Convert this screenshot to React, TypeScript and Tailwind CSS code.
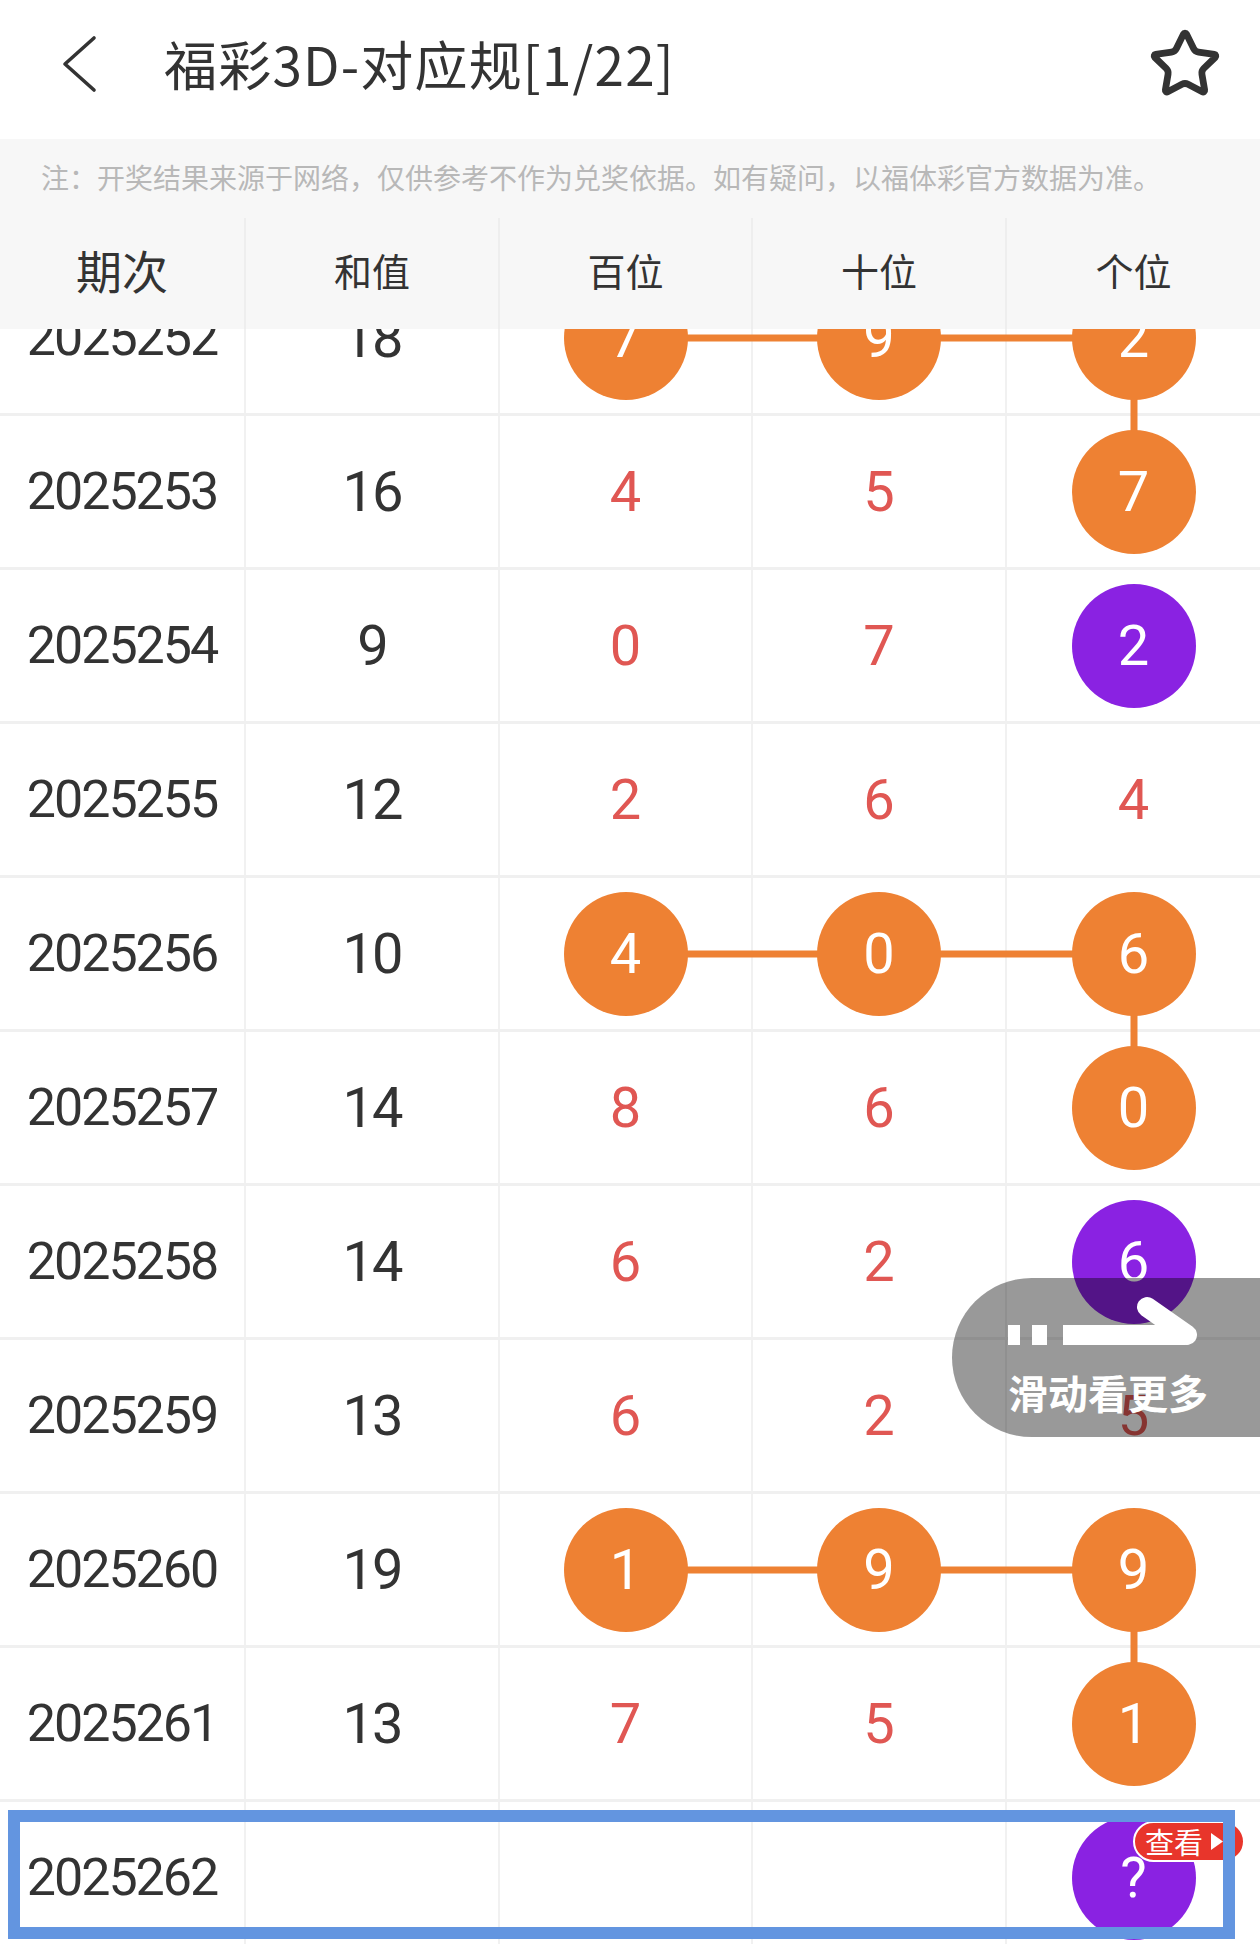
import { Star } from "lucide-react";

type Kind = "r" | "o" | "p" | "e";

interface Row {
  period: string;
  sum: string;
  digits: string[];
  kinds: Kind[];
  badge?: boolean;
}

const rows: Row[] = [
  { period: "2025252", sum: "18", digits: ["7", "9", "2"], kinds: ["o", "o", "o"] },
  { period: "2025253", sum: "16", digits: ["4", "5", "7"], kinds: ["r", "r", "o"] },
  { period: "2025254", sum: "9", digits: ["0", "7", "2"], kinds: ["r", "r", "p"] },
  { period: "2025255", sum: "12", digits: ["2", "6", "4"], kinds: ["r", "r", "r"] },
  { period: "2025256", sum: "10", digits: ["4", "0", "6"], kinds: ["o", "o", "o"] },
  { period: "2025257", sum: "14", digits: ["8", "6", "0"], kinds: ["r", "r", "o"] },
  { period: "2025258", sum: "14", digits: ["6", "2", "6"], kinds: ["r", "r", "p"] },
  { period: "2025259", sum: "13", digits: ["6", "2", "5"], kinds: ["r", "r", "r"] },
  { period: "2025260", sum: "19", digits: ["1", "9", "9"], kinds: ["o", "o", "o"] },
  { period: "2025261", sum: "13", digits: ["7", "5", "1"], kinds: ["r", "r", "o"] },
  { period: "2025262", sum: "", digits: ["", "", "?"], kinds: ["e", "e", "p"], badge: true },
];

const allOrange = (r?: Row) => !!r && r.kinds.every((k) => k === "o");

function DigitCell({
  digit,
  kind,
  left,
  right,
  up,
  down,
  badge,
  last,
}: {
  digit: string;
  kind: Kind;
  left: boolean;
  right: boolean;
  up: boolean;
  down: boolean;
  badge?: boolean;
  last: boolean;
}) {
  return (
    <div
      className={`relative flex items-center justify-center ${
        last ? "" : "border-r-2 border-[#f1f1f1]"
      }`}
    >
      {left && (
        <div className="absolute left-0 right-1/2 top-1/2 h-[7px] -translate-y-1/2 bg-[#ee8133]" />
      )}
      {right && (
        <div className="absolute left-1/2 right-[-2px] top-1/2 h-[7px] -translate-y-1/2 bg-[#ee8133]" />
      )}
      {up && (
        <div className="absolute left-1/2 top-[-3px] bottom-1/2 w-[7px] -translate-x-1/2 bg-[#ee8133]" />
      )}
      {down && (
        <div className="absolute left-1/2 top-1/2 bottom-0 w-[7px] -translate-x-1/2 bg-[#ee8133]" />
      )}
      {kind === "r" && (
        <span className="text-[56px] leading-none text-[#e05753]">{digit}</span>
      )}
      {(kind === "o" || kind === "p") && (
        <div
          className={`relative z-10 flex h-[124px] w-[124px] items-center justify-center rounded-full text-[56px] leading-none text-white ${
            kind === "o" ? "bg-[#ee8133]" : "bg-[#8a22e2]"
          }`}
        >
          {digit}
        </div>
      )}
      {badge && (
        <div className="absolute left-[126px] top-[19px] z-20 flex h-[41px] items-center gap-[8px] rounded-full border-2 border-white bg-[#e8352b] pl-[10px] pr-[20px] font-['Noto_Sans_CJK_SC',sans-serif] text-[29px] leading-none text-white">
          <span>查看</span>
          <svg width="12" height="17" viewBox="0 0 12 17">
            <path d="M0 0 L12 8.5 L0 17 Z" fill="white" />
          </svg>
        </div>
      )}
    </div>
  );
}

export default function App() {
  return (
    <div className="relative h-[1944px] w-[1260px] overflow-hidden bg-white font-[Roboto,'Noto_Sans_CJK_SC',sans-serif] text-[#333]">
      {/* nav */}
      <div className="flex h-[139px] items-center pb-3">
        <svg className="ml-[62px]" width="36" height="60" viewBox="0 0 36 60" fill="none">
          <path
            d="M32 4 L3 30 L32 56"
            stroke="#333"
            strokeWidth="3.6"
            strokeLinecap="round"
            strokeLinejoin="round"
          />
        </svg>
        <h1 className="ml-[66px] font-['Noto_Sans_CJK_SC',sans-serif] text-[53px] font-normal leading-none tracking-[1.2px]">
          福彩3D-对应规[1/22]
        </h1>
        <Star className="ml-auto mr-[38px]" size={74} strokeWidth={2.2} color="#333" />
      </div>

      {/* notice */}
      <div className="flex h-[79px] items-center bg-[#f7f7f7] pb-[3px] pl-[41px] font-['Noto_Sans_CJK_SC',sans-serif] text-[28px] leading-none text-[#b8b8b8]">
        注：开奖结果来源于网络，仅供参考不作为兑奖依据。如有疑问，以福体彩官方数据为准。
      </div>

      {/* table head */}
      <div className="grid h-[111px] grid-cols-[246px_254px_253px_254px_253px] bg-[#f7f7f7] font-['Noto_Sans_CJK_SC',sans-serif]">
        <div className="flex items-center justify-center border-r-2 border-[#eeeeee] pb-[8px] text-[46px]">
          期次
        </div>
        {["和值", "百位", "十位", "个位"].map((h, i) => (
          <div
            key={h}
            className={`flex items-center justify-center pb-[8px] text-[38px] ${
              i < 3 ? "border-r-2 border-[#eeeeee]" : ""
            }`}
          >
            {h}
          </div>
        ))}
      </div>

      {/* body */}
      <div className="h-[1615px] overflow-hidden">
        <div className="-mt-[70px]">
          {rows.map((r, ri) => {
            const prev = rows[ri - 1];
            const linked = allOrange(r);
            return (
              <div
                key={r.period}
                className="grid h-[154px] grid-cols-[246px_254px_253px_254px_253px] border-t-[3px] border-[#f0f0f0]"
              >
                <div className="flex items-center justify-center border-r-2 border-[#f1f1f1] text-[52px] leading-none tracking-[-2px]">
                  {r.period}
                </div>
                <div className="flex items-center justify-center border-r-2 border-[#f1f1f1] text-[56px] leading-none tracking-[-2px]">
                  {r.sum}
                </div>
                {r.digits.map((d, ci) => (
                  <DigitCell
                    key={ci}
                    digit={d}
                    kind={r.kinds[ci]}
                    left={linked && ci > 0}
                    right={linked && ci < 2}
                    down={linked && ci === 2}
                    up={ci === 2 && allOrange(prev) && r.kinds[2] === "o"}
                    badge={r.badge && ci === 2}
                    last={ci === 2}
                  />
                ))}
              </div>
            );
          })}
        </div>
      </div>

      {/* swipe hint */}
      <div className="absolute left-[952px] top-[1278px] z-30 flex h-[159px] w-[308px] flex-col rounded-l-full bg-black/40 pl-[56px] pt-[15px]">
        <svg width="200" height="55" viewBox="0 0 200 55">
          <rect x="0" y="32" width="12" height="20" fill="white" />
          <rect x="24" y="32" width="15" height="20" fill="white" />
          <path d="M55 32 H177 A10 10 0 0 1 177 52 H55 Z" fill="white" />
          <line x1="139" y1="14" x2="179" y2="42" stroke="white" strokeWidth="20" strokeLinecap="round" />
        </svg>
        <div className="mt-[22px] font-['Noto_Sans_CJK_SC',sans-serif] text-[40px] font-bold leading-[44px] text-white">
          滑动看更多
        </div>
      </div>

      {/* highlight frame */}
      <div className="pointer-events-none absolute left-[8px] top-[1810px] z-30 h-[129px] w-[1227px] border-[12px] border-[#6395e0]" />
    </div>
  );
}
